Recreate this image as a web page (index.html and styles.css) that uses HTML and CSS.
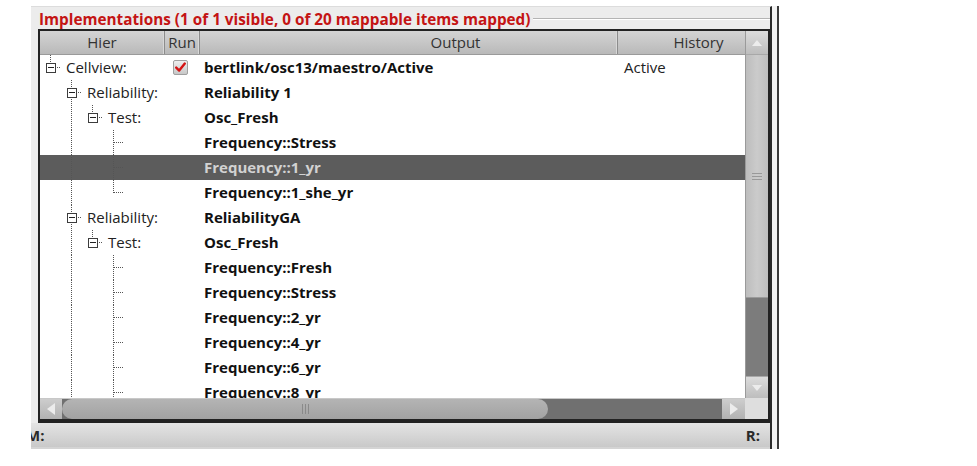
FILE: index.html
```html
<!DOCTYPE html>
<html>
<head>
<meta charset="utf-8">
<link rel="stylesheet" href="styles.css">
</head>
<body>
<div class="window">
  <div class="panel">
    <div class="titlebar">
      <span class="title">Implementations (1 of 1 visible, 0 of 20 mappable items mapped)</span>
      <span class="groove"></span>
    </div>
    <div class="frame">
      <div class="tree">
        <div class="hdr">
          <div class="hc">Hier</div>
          <div class="hc">Run</div>
          <div class="hc hc-out">Output</div>
          <div class="hc hc-hist">History</div>
        </div>
        <div class="rows">
          <div class="row">
            <div class="hier"><span class="slot box up"><i class="pm"></i></span><span class="lbl">Cellview:</span></div>
            <div class="run"><svg class="chk" width="15" height="15" viewBox="0 0 15 15"><defs><linearGradient id="g" x1="0" y1="0" x2="0" y2="1"><stop offset="0" stop-color="#f0f0f0"/><stop offset="1" stop-color="#c6c6c6"/></linearGradient></defs><rect x="0.5" y="0.5" width="14" height="14" rx="1.5" fill="url(#g)" stroke="#a0a0a0"/><path d="M3.2 7.6 L6.2 10.6 L11.8 3.6" fill="none" stroke="#d41414" stroke-width="2.4" stroke-linecap="round" stroke-linejoin="round"/></svg></div>
            <div class="out">bertlink/osc13/maestro/Active</div>
            <div class="hist">Active</div>
          </div>
          <div class="row">
            <div class="hier"><span class="slot"></span><span class="slot box up down"><i class="pm"></i></span><span class="lbl">Reliability:</span></div>
            <div class="run"></div>
            <div class="out">Reliability 1</div>
            <div class="hist"></div>
          </div>
          <div class="row">
            <div class="hier"><span class="slot"></span><span class="slot vert"></span><span class="slot box up"><i class="pm"></i></span><span class="lbl">Test:</span></div>
            <div class="run"></div>
            <div class="out">Osc_Fresh</div>
            <div class="hist"></div>
          </div>
          <div class="row">
            <div class="hier"><span class="slot"></span><span class="slot vert"></span><span class="slot"></span><span class="slot tee"></span></div>
            <div class="run"></div>
            <div class="out">Frequency::Stress</div>
            <div class="hist"></div>
          </div>
          <div class="row sel">
            <div class="hier"><span class="slot"></span><span class="slot vert"></span><span class="slot"></span><span class="slot tee"></span></div>
            <div class="run"></div>
            <div class="out">Frequency::1_yr</div>
            <div class="hist"></div>
          </div>
          <div class="row">
            <div class="hier"><span class="slot"></span><span class="slot vert"></span><span class="slot"></span><span class="slot elbow"></span></div>
            <div class="run"></div>
            <div class="out">Frequency::1_she_yr</div>
            <div class="hist"></div>
          </div>
          <div class="row">
            <div class="hier"><span class="slot"></span><span class="slot box up down"><i class="pm"></i></span><span class="lbl">Reliability:</span></div>
            <div class="run"></div>
            <div class="out">ReliabilityGA</div>
            <div class="hist"></div>
          </div>
          <div class="row">
            <div class="hier"><span class="slot"></span><span class="slot vert"></span><span class="slot box up"><i class="pm"></i></span><span class="lbl">Test:</span></div>
            <div class="run"></div>
            <div class="out">Osc_Fresh</div>
            <div class="hist"></div>
          </div>
          <div class="row">
            <div class="hier"><span class="slot"></span><span class="slot vert"></span><span class="slot"></span><span class="slot tee"></span></div>
            <div class="run"></div>
            <div class="out">Frequency::Fresh</div>
            <div class="hist"></div>
          </div>
          <div class="row">
            <div class="hier"><span class="slot"></span><span class="slot vert"></span><span class="slot"></span><span class="slot tee"></span></div>
            <div class="run"></div>
            <div class="out">Frequency::Stress</div>
            <div class="hist"></div>
          </div>
          <div class="row">
            <div class="hier"><span class="slot"></span><span class="slot vert"></span><span class="slot"></span><span class="slot tee"></span></div>
            <div class="run"></div>
            <div class="out">Frequency::2_yr</div>
            <div class="hist"></div>
          </div>
          <div class="row">
            <div class="hier"><span class="slot"></span><span class="slot vert"></span><span class="slot"></span><span class="slot tee"></span></div>
            <div class="run"></div>
            <div class="out">Frequency::4_yr</div>
            <div class="hist"></div>
          </div>
          <div class="row">
            <div class="hier"><span class="slot"></span><span class="slot vert"></span><span class="slot"></span><span class="slot tee"></span></div>
            <div class="run"></div>
            <div class="out">Frequency::6_yr</div>
            <div class="hist"></div>
          </div>
          <div class="row">
            <div class="hier"><span class="slot"></span><span class="slot vert"></span><span class="slot"></span><span class="slot tee"></span></div>
            <div class="run"></div>
            <div class="out">Frequency::8_yr</div>
            <div class="hist"></div>
          </div>
        </div>
      </div>
      <div class="vscroll">
        <div class="vbtn"><svg width="12" height="8" viewBox="0 0 12 8"><path d="M1 7 L6 1 L11 7 Z" fill="#ececec"/></svg></div>
        <div class="vthumb"><span class="grip"></span></div>
        <div class="vtrack"></div>
        <div class="vbtn vbtn-down"><svg width="12" height="8" viewBox="0 0 12 8"><path d="M1 1 L6 7 L11 1 Z" fill="#ececec"/></svg></div>
      </div>
      <div class="hscroll">
        <div class="hbtn"><svg width="10" height="14" viewBox="0 0 10 14"><path d="M9 1 L1 7 L9 13 Z" fill="#ececec"/></svg></div>
        <div class="hthumb"><span class="hgrip"></span></div>
        <div class="htrack"></div>
        <div class="hbtn"><svg width="10" height="14" viewBox="0 0 10 14"><path d="M1 1 L9 7 L1 13 Z" fill="#ececec"/></svg></div>
      </div>
      <div class="corner"></div>
    </div>
    <div class="status">
      <span class="st st-m">M:</span>
      <span class="st">R:</span>
    </div>
  </div>
  <div class="edge"></div>
</div>
</body>
</html>
```
FILE: styles.css
```css
html, body {
  margin: 0;
  padding: 0;
  background: #ffffff;
}
body {
  font-family: "Open Sans", "Noto Sans", "DejaVu Sans", sans-serif;
  font-size: 15px;
  color: #222;
}
.window {
  display: flex;
  margin: 6px 0 0 31px;
  width: 748px;
}
.panel {
  width: 739px;
  background: #ececec;
  border-top: 1px solid #dcdcdc;
  border-right: 2px solid #2a2a2a;
  display: flex;
  flex-direction: column;
}
.edge {
  width: 5px;
  background: #f2f2f2;
  border-right: 2px solid #3a3a3a;
  height: 443px;
}
.titlebar {
  display: flex;
  align-items: center;
  padding-left: 8px;
  padding-top: 1px;
  box-sizing: border-box;
  height: 22px;
}
.title {
  color: #c41414;
  font-weight: bold;
  font-size: 15.3px;
  white-space: nowrap;
}
.groove {
  flex: 1;
  height: 0;
  border-top: 1px solid #b4b4b4;
  border-bottom: 1px solid #ffffff;
  margin: 0 0 0 3px;
}
.frame {
  margin-left: 7px;
  width: 732px;
  box-sizing: border-box;
  border: 2px solid #222;
  border-bottom-width: 4px;
  display: grid;
  grid-template-columns: 705px 23px;
  grid-template-rows: 367px 21px;
  background: #fff;
}
.tree {
  display: flex;
  flex-direction: column;
  overflow: hidden;
}
.hdr, .row {
  display: grid;
  grid-template-columns: 125px 35px 418px 127px;
}
.hdr {
  height: 24px;
  flex: none;
  background: linear-gradient(#d4d4d4, #b9b9b9);
  border-bottom: 1px solid #9a9a9a;
  box-sizing: border-box;
}
.hc {
  line-height: 23px;
  text-align: center;
  color: #333;
  border-right: 1px solid #8c8c8c;
  box-shadow: inset -1px 0 #d8d8d8;
}
.hc-out {
  padding-left: 94px;
}
.hc-hist {
  padding-left: 34px;
  border-right: none;
  box-shadow: none;
}
.rows {
  flex: 1;
  overflow: hidden;
}
.row {
  height: 25px;
  line-height: 25px;
}
.row.sel {
  background: #5c5c5c;
}
.hier {
  display: flex;
  align-items: center;
  white-space: nowrap;
  overflow: hidden;
}
.lbl {
  padding-left: 5px;
  color: #222;
}
.slot {
  --dv: repeating-linear-gradient(to bottom, #555 0 1px, transparent 1px 2px);
  --dh: repeating-linear-gradient(to right, #555 0 1px, transparent 1px 2px);
  width: 21px;
  height: 25px;
  flex: none;
  display: flex;
  align-items: center;
  justify-content: center;
  background-repeat: no-repeat;
}
.vert {
  background-image: var(--dv);
  background-position: 10px 0;
  background-size: 1px 100%;
}
.tee {
  background-image: var(--dv), var(--dh);
  background-position: 10px 0, 11px 12px;
  background-size: 1px 100%, 10px 1px;
}
.elbow {
  background-image: var(--dv), var(--dh);
  background-position: 10px 0, 11px 12px;
  background-size: 1px 13px, 10px 1px;
}
.box {
  background-image: var(--dh);
  background-position: 15px 12px;
  background-size: 6px 1px;
}
.box.up {
  background-image: var(--dh), var(--dv);
  background-position: 15px 12px, 10px 0;
  background-size: 6px 1px, 1px 8px;
}
.box.up.down {
  background-image: var(--dh), var(--dv), var(--dv);
  background-position: 15px 12px, 10px 0, 10px 17px;
  background-size: 6px 1px, 1px 8px, 1px 8px;
}
.pm {
  display: block;
  width: 10px;
  height: 10px;
  box-sizing: border-box;
  border: 1px solid #3c3c3c;
  background: linear-gradient(#222, #222) no-repeat center / 6px 1px, #fff;
}
.run {
  display: flex;
  align-items: center;
  padding-left: 8px;
}
.chk {
  display: block;
}
.out {
  padding-left: 4px;
  font-weight: bold;
  color: #111;
  white-space: nowrap;
}
.sel .out {
  color: #d2d2d2;
}
.hist {
  padding-left: 6px;
  color: #222;
}
.vscroll {
  display: flex;
  flex-direction: column;
  background: #7c7c7c;
  border-left: 1px solid #9a9a9a;
}
.vbtn {
  height: 24px;
  flex: none;
  background: linear-gradient(#dcdcdc, #bdbdbd);
  display: flex;
  align-items: center;
  justify-content: center;
  border-bottom: 1px solid #a8a8a8;
  box-sizing: border-box;
}
.vbtn-down {
  height: 22px;
  border-bottom: none;
  border-top: 1px solid #a8a8a8;
}
.vthumb {
  height: 243px;
  flex: none;
  background: linear-gradient(to right, #bdbdbd, #cbcbcb 50%, #bdbdbd);
  border-bottom: 1px solid #9a9a9a;
  box-sizing: border-box;
  display: flex;
  align-items: center;
  justify-content: center;
}
.grip {
  width: 10px;
  height: 7px;
  background: repeating-linear-gradient(to bottom, #999 0 1px, transparent 1px 3px);
}
.vtrack {
  flex: 1;
  background: #7c7c7c;
}
.hscroll {
  display: flex;
  background: #707070;
  border-top: 1px solid #c8c8c8;
}
.hbtn {
  width: 22px;
  flex: none;
  background: linear-gradient(#cdcdcd, #b2b2b2);
  display: flex;
  align-items: center;
  justify-content: center;
}
.hbtn:last-child {
  width: 23px;
}
.hthumb {
  width: 486px;
  flex: none;
  border-radius: 10px;
  background: linear-gradient(#b4b4b4, #a2a2a2);
  display: flex;
  align-items: center;
  justify-content: center;
}
.hgrip {
  width: 7px;
  height: 10px;
  background: repeating-linear-gradient(to right, #8a8a8a 0 1px, transparent 1px 3px);
}
.htrack {
  flex: 1;
}
.corner {
  background: #dedede;
}
.status {
  height: 24px;
  display: flex;
  align-items: center;
  justify-content: space-between;
  padding-right: 10px;
  background: linear-gradient(#e4e4e4, #c9c9c9);
  border-bottom: 2px solid #d4d4d4;
  overflow: hidden;
  font-weight: bold;
  color: #2a2a2a;
}
.st-m {
  margin-left: -5px;
}
```
